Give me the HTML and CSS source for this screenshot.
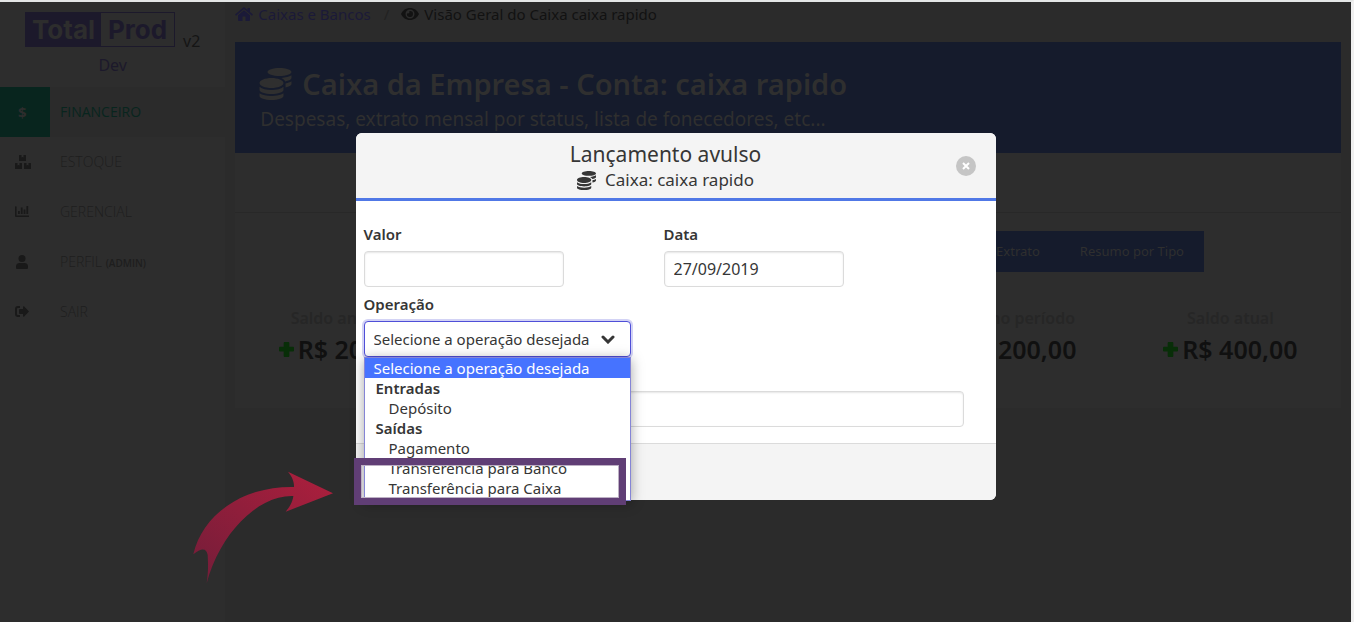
FILE: index.html
```html
<!DOCTYPE html>
<html lang="pt-BR">
<head>
<meta charset="utf-8">
<title>Total Prod - Lançamento avulso</title>
<meta name="viewport" content="width=device-width, initial-scale=1">
<link rel="stylesheet" href="styles.css">
</head>
<body>
<svg class="sprite" aria-hidden="true">
  <symbol id="coins" viewBox="0 0 512 512"><path d="M0 405v43c0 35 86 64 192 64s192-29 192-64v-43c-41 29-117 43-192 43S41 434 0 405zm320-277c106 0 192-29 192-64S426 0 320 0 128 29 128 64s86 64 192 64zM0 300v52c0 35 86 64 192 64s192-29 192-64v-52c-41 34-117 52-192 52S41 334 0 300zm416 11c57-11 96-32 96-55v-43c-23 16-57 27-96 34v64zM192 160C86 160 0 196 0 240s86 80 192 80 192-36 192-80-86-80-192-80zm219 56c61-11 101-32 101-56v-43c-36 25-98 39-163 42 30 15 53 34 62 57z"/></symbol>
  <symbol id="plus" viewBox="0 0 16 16"><path d="M6 0h4a1 1 0 0 1 1 1v4h4a1 1 0 0 1 1 1v3a1 1 0 0 1-1 1h-4v5a1 1 0 0 1-1 1H6a1 1 0 0 1-1-1v-5H1a1 1 0 0 1-1-1V6a1 1 0 0 1 1-1h4V1a1 1 0 0 1 1-1z"/></symbol>
</svg>
<div class="app">
  <aside class="sidebar">
    <div class="brand">
      <div class="brand-row">
        <div class="logo"><span class="logo-fill">Total</span><span class="logo-line">Prod</span></div>
        <span class="version">v2</span>
      </div>
      <div class="env">Dev</div>
    </div>
    <nav class="menu">
      <a href="#" class="menu-item active"><span class="menu-icon dollar">$</span><span>FINANCEIRO</span></a>
      <a href="#" class="menu-item"><span class="menu-icon"><svg width="16" height="14" viewBox="0 0 16 14"><path d="M4.500 0h2v2.500l1-.5 1 .5V0h2a.5.5 0 0 1 .5.5v5a.5.5 0 0 1-.5.5h-6a.5.5 0 0 1-.5-.5v-5a.5.5 0 0 1 .5-.5zM.5 8h2v2.500l1-.5 1 .5V8h2a.5.5 0 0 1 .5.5v5a.5.5 0 0 1-.5.5h-6a.5.5 0 0 1-.5-.5v-5A.5.5 0 0 1 .5 8zM9.500 8h2v2.500l1-.5 1 .5V8h2a.5.5 0 0 1 .5.500v5a.5.5 0 0 1-.5.5h-6a.5.5 0 0 1-.5-.5v-5a.5.5 0 0 1 .5-.5z"/></svg></span><span>ESTOQUE</span></a>
      <a href="#" class="menu-item"><span class="menu-icon"><svg width="14" height="12" viewBox="0 0 14 12"><path d="M0 1a.8.8 0 0 1 1.600 0v8.400H14V11H1a1 1 0 0 1-1-1zM3 5h1.800v3H3zM5.800 1.500h1.800V8H5.800zM8.600 3.500h1.800V8H8.600zM11.400 0h1.800v8h-1.800z"/></svg></span><span>GERENCIAL</span></a>
      <a href="#" class="menu-item"><span class="menu-icon person"><svg width="12" height="14" viewBox="0 0 12 14"><circle cx="6" cy="3.500" r="3.500"/><path d="M3.500 8h5A3.500 3.500 0 0 1 12 11.500V13a1 1 0 0 1-1 1H1a1 1 0 0 1-1-1v-1.500A3.500 3.500 0 0 1 3.500 8z"/></svg></span><span>PERFIL <small>(ADMIN)</small></span></a>
      <a href="#" class="menu-item"><span class="menu-icon"><svg width="14" height="12" viewBox="0 0 14 12"><path d="M5 1v1H3a1 1 0 0 0-1 1v5a1 1 0 0 0 1 1h2v2H3a3 3 0 0 1-3-3V3a3 3 0 0 1 3-3h2zM8 1c0-.8.7-1 1.200-.5L14 5.500 9.200 10.500C8.700 11 8 10.800 8 10V8H5a1 1 0 0 1-1-1V4a1 1 0 0 1 1-1h3z"/></svg></span><span>SAIR</span></a>
    </nav>
  </aside>

  <main class="main">
    <nav class="crumbs">
      <a href="#" class="crumb"><svg width="18" height="14" viewBox="0 0 18 14"><path d="M9 0l3.500 3V1H15v4l3 2.600-1 1.100L9 2 1 8.700 0 7.600zM9 3.200l6 5V13a1 1 0 0 1-1 1h-3.500V9.500h-3V14H4a1 1 0 0 1-1-1V8.200z"/></svg>Caixas e Bancos</a>
      <span class="slash">/</span>
      <span class="crumb current"><svg width="18" height="12" viewBox="0 0 18 12"><path fill-rule="evenodd" d="M9 0c4 0 7.300 2.300 9 6-1.700 3.700-5 6-9 6S1.700 9.700 0 6c1.700-3.700 5-6 9-6zm0 1.500a4.500 4.500 0 1 0 0 9 4.500 4.500 0 0 0 0-9zM9 3a3 3 0 1 1-2.900 2.200A1.500 1.500 0 0 0 8.200 3.100z"/></svg>Visão Geral do Caixa caixa rapido</span>
    </nav>
    <header class="hero">
      <h1><svg width="33" height="32"><use href="#coins"/></svg>Caixa da Empresa - Conta: caixa rapido</h1>
      <p>Despesas, extrato mensal por status, lista de fonecedores, etc...</p>
    </header>
    <section class="card">
      <div class="card-top"></div>
      <div class="tabs">
        <a href="#">Extrato</a>
        <a href="#">Resumo por Tipo</a>
      </div>
      <div class="totals">
        <div class="total first"><h2>Saldo anterior</h2><p><svg width="15" height="15"><use href="#plus"/></svg>R$ 200,00</p></div>
        <div class="total period"><h2>Saldo no período</h2><p><svg width="15" height="15"><use href="#plus"/></svg>R$ 200,00</p></div>
        <div class="total last"><h2>Saldo atual</h2><p><svg width="15" height="15"><use href="#plus"/></svg>R$ 400,00</p></div>
      </div>
    </section>
  </main>
</div>

<div class="overlay">
  <form class="modal" role="dialog" aria-labelledby="modal-title">
    <header class="modal-head">
      <h2 id="modal-title">Lançamento avulso</h2>
      <p><svg width="19" height="19"><use href="#coins"/></svg>Caixa: caixa rapido</p>
      <button type="button" class="close" aria-label="Fechar"><svg width="10" height="10" viewBox="0 0 10 10"><path d="M2 2l6 6M8 2l-6 6"/></svg></button>
    </header>
    <div class="modal-body">
      <div class="field"><label for="valor">Valor</label><input id="valor" class="value" type="text"></div>
      <div class="field"><label for="data">Data</label><input id="data" class="date" type="text" value="27/09/2019"></div>
      <div class="field full">
        <label for="operacao">Operação</label>
        <div class="select">
          <select id="operacao"><option>Selecione a operação desejada</option></select>
          <svg class="chevron" width="14" height="9" viewBox="0 0 14 9"><path d="M2 2l5 5 5-5"/></svg>
          <ul class="options" role="listbox" aria-label="Operação">
            <li class="chosen" role="option" aria-selected="true">Selecione a operação desejada</li>
            <li class="group">Entradas</li>
            <li class="child" role="option">Depósito</li>
            <li class="group">Saídas</li>
            <li class="child" role="option">Pagamento</li>
            <li class="child" role="option">Transferência para Banco</li>
            <li class="child" role="option">Transferência para Caixa</li>
          </ul>
          <div class="highlight"></div>
          <svg class="arrow" width="190" height="160" viewBox="0 0 570 480">
            <defs><linearGradient id="red" x1="0" y1="1" x2="1" y2="0"><stop offset="0" stop-color="#721d39"/><stop offset="1" stop-color="#ae1f3d"/></linearGradient></defs>
            <path fill="url(#red)" d="M40 343C68 225 185 138 342 141C343 124 335 108 324 95L459 160L317 215C328 202 338 186 340 168C235 164 120 280 80 430C86 392 84 366 83 345C80 325 65 322 40 343Z"/>
          </svg>
        </div>
      </div>
      <div class="field full unlabeled"><input class="wide" type="text" aria-label="Descrição"></div>
    </div>
    <footer class="modal-foot"></footer>
  </form>
</div>
</body>
</html>
```

FILE: styles.css
```css
* { box-sizing: border-box; }
body, h1, h2, p, ul { margin: 0; padding: 0; }
body {
  min-height: 100vh;
  background: #2b2b2b;
  border-top: 2px solid #e4e6e6;
  border-right: 3px solid #f0f0f0;
  font-family: "Noto Sans", sans-serif;
  font-size: 15px;
  line-height: 24px;
  color: #363636;
  overflow: hidden;
}
a { color: inherit; text-decoration: none; }
svg { fill: currentColor; flex: none; }
.sprite { position: absolute; width: 0; height: 0; }

.app { display: flex; min-height: calc(100vh - 2px); }
.sidebar { flex: 0 0 225px; background: #2d2d2d; }
.brand { height: 85px; padding: 10px 25px 0; color: #1c192b; }
.brand-row { display: flex; align-items: flex-end; gap: 8px; }
.logo {
  display: flex;
  flex: 0 0 150px;
  height: 35px;
  border: 1px solid #1c192b;
  font: 700 26px/33px Inter, sans-serif;
}
.logo-fill { flex: 1; background: #1c192b; color: #2d2d2d; text-align: center; }
.logo-line { flex: 0 0 73px; text-align: center; }
.version { color: #151515; font-size: 16px; line-height: 12px; }
.env { padding: 6px 0; text-align: center; font-size: 16px; }
.menu-item {
  display: flex;
  align-items: center;
  gap: 10px;
  height: 50px;
  color: #1e1e1e;
  font: 300 14px/20px "Open Sans", sans-serif;
}
.menu-item small { font-size: 10px; font-weight: 600; }
.menu-icon { display: flex; align-items: center; flex: 0 0 50px; height: 50px; padding-left: 15px; color: #191919; }
.menu-icon.person { padding-left: 16px; }
.menu-item.active { background: #2b2b2b; color: #08251e; font-weight: 500; }
.active .menu-icon { background: #08251e; color: #2d2d2d; }
.menu-icon.dollar { padding-left: 18px; font-size: 15px; font-weight: 700; }

.main { flex: 1; min-width: 0; padding: 0 10px; }
.crumbs { display: flex; height: 40px; font-size: 15px; white-space: nowrap; }
.crumb { display: flex; align-items: center; gap: 5px; height: 24px; color: #1b1a38; }
.crumb.current { color: #121212; }
.slash { padding: 0 12px 0 13px; color: #222; }
.hero { height: 111px; padding: 24px; background: #151b2c; color: #2f2f2f; white-space: nowrap; }
.hero h1 { display: flex; align-items: center; gap: 10px; height: 36px; font-size: 29px; line-height: 36px; font-weight: 600; }
.hero p { padding-left: 1px; font-size: 19px; line-height: 34px; }
.card { height: 255px; background: #2d2d2d; }
.card-top { height: 60px; border-bottom: 1px solid #282828; }
.tabs { display: flex; justify-content: flex-end; padding: 18px 137px 0 0; color: #2f2f2f; font-size: 13px; line-height: 41px; height: 59px; }
.tabs a { padding: 0 20px; background: #151b2c; }
.totals { display: grid; grid-template-columns: repeat(5, 1fr); padding-top: 33px; text-align: center; white-space: nowrap; }
.total h2 { font-size: 16px; line-height: 26px; font-weight: 600; color: #262626; }
.total p { display: flex; align-items: center; justify-content: center; gap: 4px; font-size: 25px; line-height: 36px; font-weight: 600; color: #101010; }
.total svg { color: #082e08; }
.first { grid-column: 1; }
.period { grid-column: 4; }
.last { grid-column: 5; }

.overlay { position: fixed; inset: 0 3px 0 0; display: flex; justify-content: center; align-items: flex-start; padding-top: 133px; }
.modal { flex: 0 1 640px; background: #fff; border-radius: 6px; }
.modal-head { position: relative; padding: 7px 20px 6px; background: #f4f4f4; border-bottom: 3px solid #5078e6; border-radius: 6px 6px 0 0; text-align: center; }
.modal-head h2 { padding-right: 20px; font-size: 21px; line-height: 28px; font-weight: 400; }
.modal-head p { display: flex; align-items: center; justify-content: center; gap: 9px; padding-right: 20px; font-size: 17px; line-height: 24px; }
.close { position: absolute; right: 20px; top: 23px; width: 20px; height: 20px; padding: 5px; border: 0; border-radius: 50%; background: #c5c5c5; display: flex; }
.close svg { stroke: #fff; stroke-width: 2; }
.modal-body { display: grid; grid-template-columns: 300px 300px; row-gap: 5px; padding: 21px 8px 16px; }
.field { display: flex; flex-direction: column; align-items: flex-start; gap: 5px; }
.full { grid-column: 1 / 3; }
.unlabeled { padding-top: 29px; }
.field label { font-weight: 600; }
.field input, .field select {
  height: 36px;
  padding: 0 9px;
  border: 1px solid #dbdbdb;
  border-radius: 4px;
  background: #fff;
  box-shadow: inset 0 1px 2px rgba(10, 10, 10, .1);
  color: #363636;
  font: inherit;
}
.field .value { width: 200px; }
.field .date { width: 180px; font-size: 16px; }
.field .wide { width: 100%; }
.select { position: relative; width: 267px; height: 36px; }
.field select { width: 100%; appearance: none; border-color: #4f4fd8; box-shadow: 0 0 0 2px rgba(80, 80, 216, .25); }
.chevron { position: absolute; right: 16px; top: 14px; fill: none; stroke: #363636; stroke-width: 3; stroke-linecap: round; pointer-events: none; }
.options {
  position: absolute;
  z-index: 1;
  top: 36px;
  left: 0;
  width: 100%;
  height: 144px;
  overflow: hidden;
  border: 1px solid #8585d6;
  background: #fff;
  box-shadow: 0 2px 12px rgba(0, 0, 0, .35);
  list-style: none;
  line-height: 20px;
}
.options li { height: 20px; padding-left: 11px; white-space: nowrap; }
.options .chosen { padding-left: 9px; background: #4673ff; color: #fff; }
.options .group { font-weight: 600; }
.options .child { padding-left: 24px; }
.highlight { position: absolute; z-index: 2; left: -10px; top: 137px; width: 272px; height: 47px; border: 7px solid #603e75; box-shadow: inset 0 0 0 1px #bdb0c4; }
.arrow { position: absolute; left: -184px; top: 119px; z-index: 2; pointer-events: none; }
.modal-foot { height: 57px; background: #f4f4f4; border-top: 1px solid #dbdbdb; border-radius: 0 0 6px 6px; }
```
